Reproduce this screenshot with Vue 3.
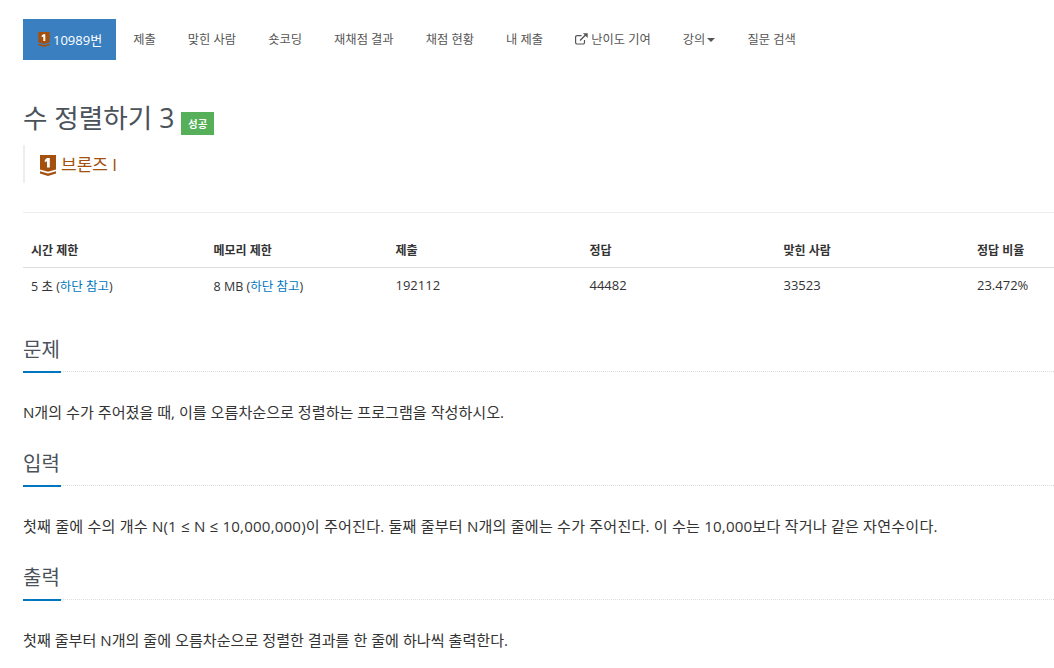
<script setup>
const navs = [
  { label: '제출' }, { label: '맞힌 사람' }, { label: '숏코딩' }, { label: '재채점 결과' },
  { label: '채점 현황' }, { label: '내 제출' }, { label: '난이도 기여', ext: true },
  { label: '강의', caret: true }, { label: '질문 검색' }
]
const heads = ['시간 제한', '메모리 제한', '제출', '정답', '맞힌 사람', '정답 비율']
const sections = [
  { title: '문제', text: 'N개의 수가 주어졌을 때, 이를 오름차순으로 정렬하는 프로그램을 작성하시오.' },
  { title: '입력', wide: true, text: '첫째 줄에 수의 개수 N(1 ≤ N ≤ 10,000,000)이 주어진다. 둘째 줄부터 N개의 줄에는 수가 주어진다. 이 수는 10,000보다 작거나 같은 자연수이다.' },
  { title: '출력', text: '첫째 줄부터 N개의 줄에 오름차순으로 정렬한 결과를 한 줄에 하나씩 출력한다.' }
]
</script>

<template>
  <div class="page">
    <nav class="nav">
      <a class="item active">
        <svg class="tier small" viewBox="0 0 16 21"><path fill="#a4500f" d="M0 0h16v14.5l-8 2.3-8-2.3z"/><path fill="#a4500f" d="M0 16.2l8 2.3 8-2.3v2.2L8 21 0 18.4z"/><path fill="#fff" d="M7 3h2.8v9.5H7V6.2L4.8 7.2V5z"/></svg>
        10989번
      </a>
      <a v-for="n in navs" :key="n.label" class="item">
        <svg v-if="n.ext" class="ext" viewBox="0 0 13 12"><path fill="none" stroke="#555" stroke-width="1.2" d="M9.5 7v2.6a1.4 1.4 0 0 1-1.4 1.4H2a1.4 1.4 0 0 1-1.4-1.4V4A1.4 1.4 0 0 1 2 2.6h4.5"/><path fill="none" stroke="#555" stroke-width="1.4" d="M5 7.5L11 1.5"/><path fill="#555" d="M8 0.3h4.7V5z"/></svg>
        {{ n.label }}<span v-if="n.caret" class="caret"></span>
      </a>
    </nav>

    <h1 class="title">수 정렬하기 3 <span class="badge">성공</span></h1>
    <blockquote class="tier-box">
      <svg class="tier" viewBox="0 0 16 21"><path fill="#a4500f" d="M0 0h16v14.5l-8 2.3-8-2.3z"/><path fill="#a4500f" d="M0 16.2l8 2.3 8-2.3v2.2L8 21 0 18.4z"/><path fill="#fff" d="M7 3h2.8v9.5H7V6.2L4.8 7.2V5z"/></svg>
      <span class="tier-name">브론즈 I</span>
    </blockquote>
    <hr class="rule" />

    <table class="info">
      <thead>
        <tr><th v-for="h in heads" :key="h">{{ h }}</th></tr>
      </thead>
      <tbody>
        <tr>
          <td>5 초 (<a>하단 참고</a>)</td>
          <td>8 MB (<a>하단 참고</a>)</td>
          <td class="num">192112</td>
          <td class="num">44482</td>
          <td class="num">33523</td>
          <td class="num">23.472%</td>
        </tr>
      </tbody>
    </table>

    <section v-for="s in sections" :key="s.title" class="section">
      <div class="head"><h2>{{ s.title }}</h2></div>
      <p :class="{ wide: s.wide }">{{ s.text }}</p>
    </section>
  </div>
</template>

<style>
html, body { margin: 0; background: #fff; overflow: hidden; }
</style>

<style scoped>
.page {
  height: 668px;
  overflow: hidden;
  padding: 19px 0 0 23px;
  box-sizing: border-box;
  font-family: "Open Sans", "Noto Sans CJK KR", sans-serif;
  color: #333;
  font-size: 14px;
}
.nav { display: flex; height: 41px; font-size: 12.25px; }
.item { display: flex; align-items: center; padding: 0 16.05px; color: #555; white-space: nowrap; margin-top: -1px; }
.item.active { background: #3a80c0; color: #fff; font-size: 13px; padding: 0 14px; margin: 0 1px 0 0; }
.tier.small { width: 12px; height: 15px; margin: 0 3px 0 1px; }
.ext { width: 13px; height: 12px; margin-right: 3px; }
.caret {
  display: inline-block; margin-left: 2px; margin-top: 1px;
  border-top: 4px solid #555; border-left: 4px solid transparent; border-right: 4px solid transparent;
}
.title { margin: 39px 0 0; font-size: 26.6px; font-weight: 400; line-height: 38px; color: #4a525a; display: flex; align-items: center; white-space: pre; }
.badge {
  background: #55b059; color: #fff; font-size: 10.5px; font-weight: 600;
  width: 33px; height: 23px; margin: 11px 0 0 0; display: flex; align-items: center; justify-content: center;
}
.tier-box {
  margin: 8px 0 0; height: 38px; border-left: 2px solid #eee; padding-left: 15px;
  display: flex; align-items: center; box-sizing: border-box; font-size: 17px;
}
.tier { width: 16px; height: 21px; margin: 3px 5px 0 0; }
.tier-name { color: #a4500f; margin-bottom: 1px; }
.rule { margin: 29px 0 0; border: 0; border-top: 1px solid #eee; }
.info { width: 1031px; border-collapse: collapse; margin: 18px 0 28px; font-size: 12.5px; table-layout: fixed; }
.info th { text-align: left; font-weight: 600; padding: 2px 8px 0; height: 36px; box-sizing: border-box; border-bottom: 1px solid #ddd; font-size: 12px; }
.info td { padding: 0 8px; height: 35px; }
.info td.num { font-size: 13px; }
.info th:nth-child(1) { width: 182.5px; }
.info th:nth-child(2) { width: 182px; }
.info th:nth-child(3) { width: 194px; }
.info th:nth-child(4) { width: 194px; }
.info th:nth-child(5) { width: 193.5px; }
.info a { color: #0076c0; }
.head { border-bottom: 1px dotted #ddd; margin-top: 23px; height: 40px; }
h2 { margin: 0; font-size: 20px; font-weight: 400; line-height: 38px; color: #4a525a; width: 38px; height: 40px; border-bottom: 2px solid #0076c0; white-space: nowrap; }
p { margin: 30px 0 0; font-size: 15.1px; line-height: 20px; color: #333; white-space: nowrap; }
p.wide { letter-spacing: .18px; }
</style>
